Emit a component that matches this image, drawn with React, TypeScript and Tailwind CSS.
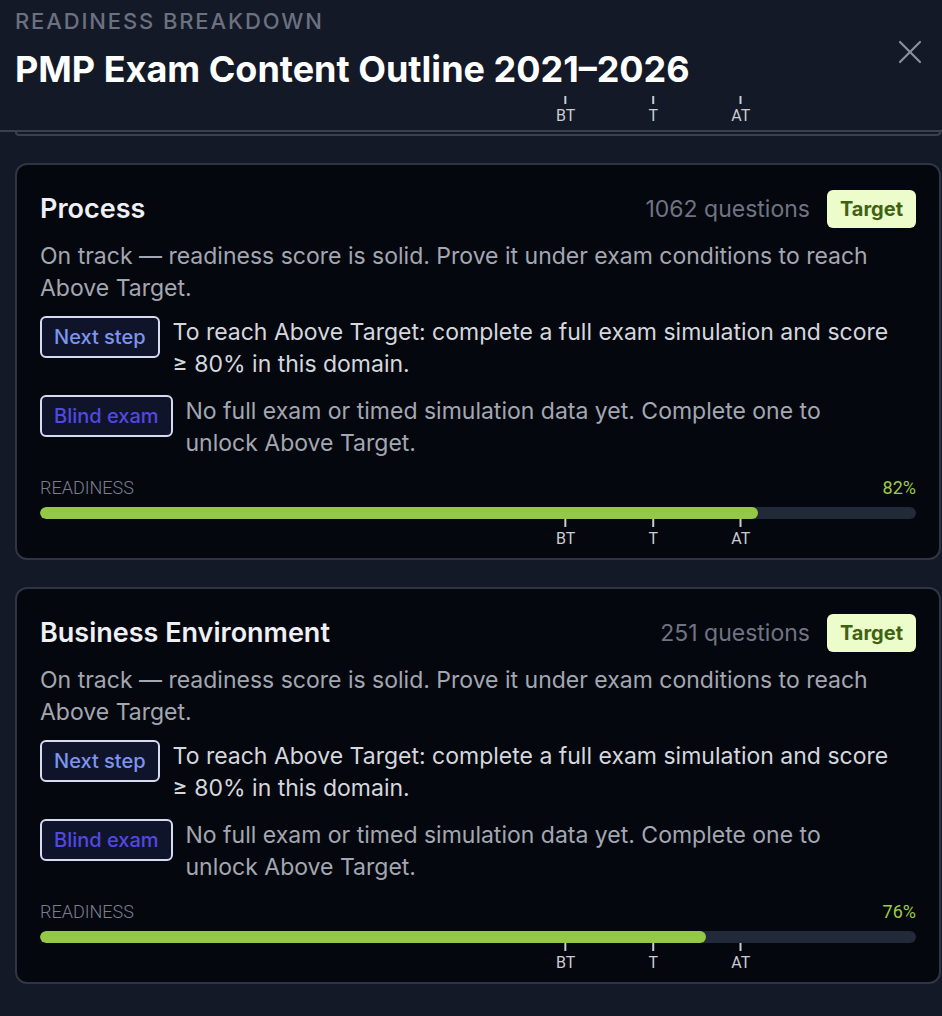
import { X } from 'lucide-react';

type Domain = {
  name: string;
  questions: number;
  readiness: number;
};

const domains: Domain[] = [
  { name: 'Process', questions: 1062, readiness: 82 },
  { name: 'Business Environment', questions: 251, readiness: 76 },
];

const marks = [
  { label: 'BT', at: 60 },
  { label: 'T', at: 70 },
  { label: 'AT', at: 80 },
];

function Ticks() {
  return (
    <div className="relative h-[30px]">
      {marks.map((m) => (
        <div
          key={m.label}
          className="absolute top-0 flex -translate-x-1/2 flex-col items-center"
          style={{ left: `${m.at}%` }}
        >
          <div className="h-[8px] w-[2px] bg-[#c9ccd3]" />
          <span className="mt-[3px] font-['Roboto',sans-serif] text-[16px] leading-[18px] text-[#c9ccd3]">
            {m.label}
          </span>
        </div>
      ))}
    </div>
  );
}

function DomainCard({ d }: { d: Domain }) {
  return (
    <div className="mt-[27px] rounded-[12px] border-2 border-[#2f3544] bg-[#05070f] px-[23px] pt-[25px] pb-[9px]">
      <div className="flex items-center justify-between">
        <h3 className="text-[27px] font-semibold leading-[36px] text-[#eef0f4]">{d.name}</h3>
        <div className="flex items-center gap-[17px]">
          <span className="text-[23px] text-[#6f7482]">{d.questions} questions</span>
          <span className="rounded-[6px] bg-[#ecfccb] px-[13px] py-[5px] text-[20px] font-bold leading-[28px] text-[#3f6212]">
            Target
          </span>
        </div>
      </div>
      <p className="mt-[12px] text-[23px] leading-[32px] text-[#a3a7b1]">
        On track — readiness score is solid. Prove it under exam conditions to reach Above Target.
      </p>
      <div className="mt-[12px] flex items-start gap-[13px]">
        <span className="shrink-0 rounded-[6px] border-2 border-[#d7daf0] bg-[#10142a] px-[12px] py-[6px] text-[20px] font-medium leading-[26px] text-[#7c95ee]">
          Next step
        </span>
        <p className="text-[23px] leading-[32px] text-[#d4d7de]">
          To reach Above Target: complete a full exam simulation and score ≥{'\u00a0'}80% in this domain.
        </p>
      </div>
      <div className="mt-[15px] flex items-start gap-[13px]">
        <span className="shrink-0 rounded-[6px] border-2 border-[#d7daf0] bg-[#10142a] px-[12px] py-[6px] text-[20px] font-medium leading-[26px] text-[#5149e0]">
          Blind exam
        </span>
        <p className="text-[23px] leading-[32px] text-[#a3a7b1]">
          No full exam or timed simulation data yet. Complete one to unlock{'\u00a0'}Above Target.
        </p>
      </div>
      <div className="mt-[19px] flex items-center justify-between font-['Roboto',sans-serif] text-[18px] leading-[20px]">
        <span className="font-light text-[#7a7f8c]">READINESS</span>
        <span className="text-[#9ccc45]">{d.readiness}%</span>
      </div>
      <div className="mt-[9px] h-[12px] overflow-hidden rounded-full bg-[#222938]">
        <div className="h-full rounded-full bg-[#94c945]" style={{ width: `${d.readiness}%` }} />
      </div>
      <Ticks />
    </div>
  );
}

export default function App() {
  return (
    <div className="min-h-[1016px] w-[942px] overflow-hidden bg-[#131927] font-['Inter',sans-serif]">
      <header className="relative h-[132px] border-b-2 border-[#3a4050] px-[15px] pt-[7px]">
        <div className="text-[22px] font-medium uppercase leading-[28px] tracking-[0.085em] text-[#6b7180]">
          Readiness Breakdown
        </div>
        <h1 className="mt-[12px] text-[36px] font-bold leading-[44px] text-white">
          PMP Exam Content Outline 2021–2026
        </h1>
        <button className="absolute right-[12px] top-[32px] text-[#8a909d]">
          <X className="h-[40px] w-[40px]" strokeWidth={1.3} />
        </button>
        <div className="absolute bottom-[4px] left-[40px] right-[26px]">
          <div className="relative h-[30px]">
            {marks.map((m) => (
              <div
                key={m.label}
                className="absolute top-0 flex -translate-x-1/2 flex-col items-center"
                style={{ left: `${m.at}%` }}
              >
                <div className="h-[8px] w-[2px] bg-[#c9ccd3]" />
                <span className="mt-[3px] font-['Roboto',sans-serif] text-[16px] leading-[18px] text-[#c9ccd3]">
                  {m.label}
                </span>
              </div>
            ))}
          </div>
        </div>
      </header>
      <div className="pl-[15px] pr-[1px]">
        <div className="h-[4px] rounded-b-[12px] border-x-2 border-b-2 border-[#3a4050]" />
        {domains.map((d) => (
          <DomainCard key={d.name} d={d} />
        ))}
      </div>
    </div>
  );
}
